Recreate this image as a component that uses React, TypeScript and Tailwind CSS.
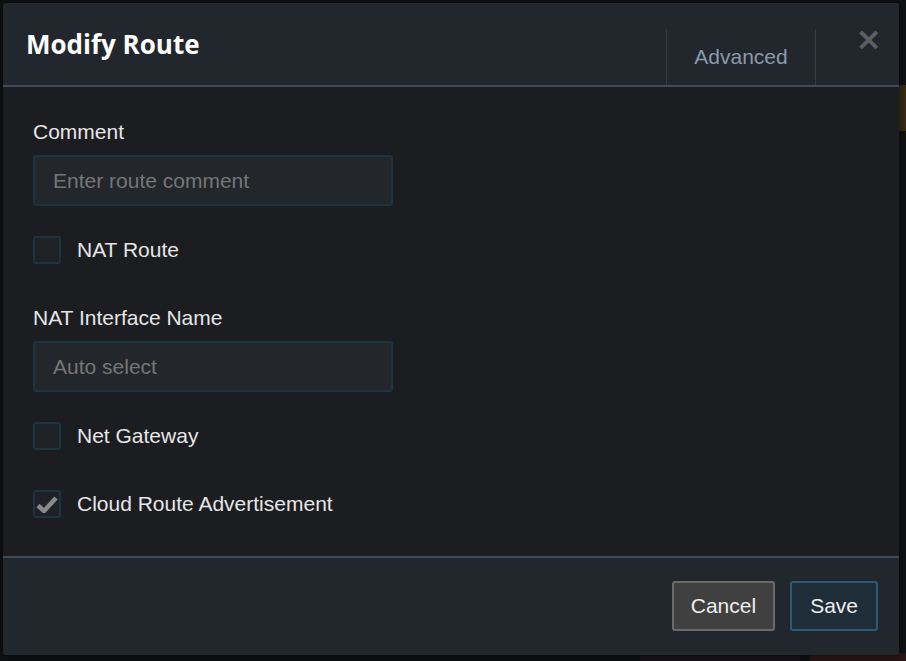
import React from 'react';

const sans = { fontFamily: '"Liberation Sans", Arial, sans-serif' };

const Checkbox: React.FC<{ checked?: boolean; label: string; className?: string }> = ({ checked, label, className }) => (
  <label className={`flex items-center h-[28px] ${className ?? ''}`}>
    <span className="w-[28px] h-[28px] rounded-[3px] border-2 border-[#1c3340] bg-[#1e2126] flex items-center justify-center">
      {checked && (
        <svg width="22" height="18" viewBox="0 0 22 18">
          <path d="M2 10.5 L8 16 L20 3" fill="none" stroke="#8a8a8a" strokeWidth="4.5" strokeLinejoin="miter" />
        </svg>
      )}
    </span>
    <span className="ml-[16px] text-[21px] leading-[24px] text-[#e6e6e6]">{label}</span>
  </label>
);

const TextInput: React.FC<{ placeholder: string; className?: string }> = ({ placeholder, className }) => (
  <input
    placeholder={placeholder}
    className={`w-[360px] h-[51px] px-[18px] rounded-[3px] border-2 border-[#1c3340] bg-[#23262b] text-[21px] text-[#ddd] placeholder:text-[#767676] outline-none ${className ?? ''}`}
    style={sans}
  />
);

export default function App() {
  return (
    <div className="relative w-[906px] h-[661px] bg-[#101113] overflow-hidden" style={sans}>
      {/* faint page content behind the overlay */}
      <div className="absolute right-0 top-[85px] w-[10px] h-[46px] bg-[#3a2a12]" />
      <div className="absolute right-0 bottom-0 w-[96px] h-[8px] bg-[#2a1616]" />
      <div className="absolute left-[640px] bottom-0 w-[160px] h-[8px] bg-[#17121c]" />

      <div className="relative ml-[3px] mt-[3px] w-[896px] h-[652px] flex flex-col rounded-[3px] overflow-hidden bg-[#1c1d21] shadow-[0_0_8px_rgba(0,0,0,0.6)]">
        {/* header */}
        <div className="h-[84px] flex bg-[#22262d] border-b-2 border-[#3b4d5b]">
          <h2
            className="flex-1 pl-[23px] pt-[25px] text-[26px] leading-[32px] font-bold text-white"
            style={{ fontFamily: '"Open Sans", "DejaVu Sans", sans-serif' }}
          >
            Modify Route
          </h2>
          <div className="mt-[26px] w-[150px] flex items-center justify-center border-x border-[#343b44] text-[21px] text-[#8b9aab] pb-[1px]">
            Advanced
          </div>
          <div className="w-[83px] flex justify-end pr-[17px]">
            <span className="mt-[16px] text-[32px] leading-[40px] font-bold text-[#5b5f64]" style={{ fontFamily: '"DejaVu Sans", sans-serif' }}>
              ×
            </span>
          </div>
        </div>

        {/* body */}
        <div className="flex-1 flex flex-col pl-[30px] pt-[33px]">
          <span className="text-[21px] leading-[24px] text-[#e6e6e6]">Comment</span>
          <TextInput placeholder="Enter route comment" className="mt-[11px]" />
          <Checkbox label="NAT Route" className="mt-[30px]" />
          <span className="mt-[42px] text-[21px] leading-[24px] text-[#e6e6e6]">NAT Interface Name</span>
          <TextInput placeholder="Auto select" className="mt-[11px]" />
          <Checkbox label="Net Gateway" className="mt-[30px]" />
          <Checkbox label="Cloud Route Advertisement" checked className="mt-[40px]" />
        </div>

        {/* footer */}
        <div className="h-[99px] flex justify-end items-start gap-[15px] pt-[23px] pr-[21px] bg-[#22262d] border-t-2 border-[#3b4d5b]">
          <button className="h-[50px] px-[17px] rounded-[3px] border-2 border-[#6a6a6a] bg-[#404040] text-[21px] text-[#eeeeee]">
            Cancel
          </button>
          <button className="h-[50px] px-[18px] rounded-[3px] border-2 border-[#2d5877] bg-[#1f2d39] text-[21px] text-[#eeeeee]">
            Save
          </button>
        </div>
      </div>
    </div>
  );
}
